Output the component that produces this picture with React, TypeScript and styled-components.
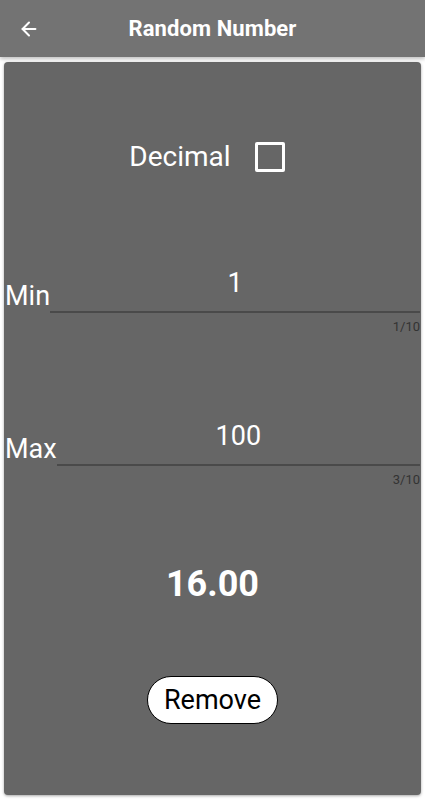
import React, { useState } from "react";
import styled, { createGlobalStyle } from "styled-components";
import { ArrowLeft } from "lucide-react";

const GlobalStyle = createGlobalStyle`
  html, body {
    margin: 0;
    padding: 0;
    background: #ffffff;
    font-family: Roboto, "Noto Sans", sans-serif;
  }
  * {
    box-sizing: border-box;
  }
`

export default function App() {
    const [decimal, setDecimal] = useState(false)
    return (
        <>
            <GlobalStyle />
            <Page>
                <Header>
                    <BackButton aria-label="back">
                        <ArrowLeft size={22} strokeWidth={2.2} />
                    </BackButton>
                    <Title>Random Number</Title>
                </Header>
                <Card>
                    <DecimalRow>
                        <span>Decimal</span>
                        <CheckBox checked={decimal} onClick={() => setDecimal(!decimal)} />
                    </DecimalRow>
                    <Field label="Min" value="1" top={96} />
                    <Field label="Max" value="100" top={87} />
                    <Result>16.00</Result>
                    <RemoveButton>Remove</RemoveButton>
                </Card>
            </Page>
        </>
    )
}

const Field: React.FC<{
    label: string
    value: string
    top: number
}> = ({ label, value, top }) => {
    return (
        <FieldBlock $top={top}>
            <FieldRow>
                <Label>{label}</Label>
                <InputWrap>
                    <Input defaultValue={value} maxLength={10} />
                </InputWrap>
            </FieldRow>
            <Counter>{value.length}/10</Counter>
        </FieldBlock>
    )
}

const Page = styled.div`
  width: 425px;
  height: 800px;
  display: flex;
  flex-direction: column;
`
const Header = styled.div`
  height: 57px;
  flex-shrink: 0;
  background: #737373;
  box-shadow: 0 2px 4px rgba(0, 0, 0, 0.25);
  display: flex;
  align-items: center;
  justify-content: center;
  position: relative;
  z-index: 1;
`
const BackButton = styled.button`
  position: absolute;
  left: 12px;
  top: 16px;
  background: none;
  border: none;
  padding: 2px 6px;
  color: #ffffff;
  display: flex;
`
const Title = styled.div`
  color: #ffffff;
  font-size: 22px;
  font-weight: 700;
  letter-spacing: 0.1px;
  margin-bottom: 1px;
`
const Card = styled.div`
  margin: 5px 4px 5px 4px;
  flex: 1;
  background: #666666;
  border-radius: 4px;
  box-shadow: 0 1px 3px rgba(0, 0, 0, 0.35);
  display: flex;
  flex-direction: column;
  align-items: center;
  padding: 0 1px;
`
const DecimalRow = styled.div`
  margin-top: 80px;
  margin-right: 11px;
  display: flex;
  align-items: center;
  gap: 24px;
  color: #ffffff;
  font-size: 28px;
  line-height: 30px;
`
const CheckBox = styled.div<{ checked: boolean }>`
  width: 30px;
  height: 30px;
  border: 3px solid #ffffff;
  border-radius: 2px;
  background: ${p => p.checked ? '#ffffff' : 'transparent'};
  cursor: pointer;
`
const FieldBlock = styled.div<{ $top: number }>`
  width: 100%;
  margin-top: ${p => p.$top}px;
  display: flex;
  flex-direction: column;
`
const FieldRow = styled.div`
  display: flex;
  align-items: flex-end;
`
const Label = styled.div`
  color: #ffffff;
  font-size: 27px;
  line-height: 32px;
  margin-bottom: 1px;
`
const InputWrap = styled.div`
  flex: 1;
  border-bottom: 2px solid #4a4a4a;
  padding-bottom: 13px;
`
const Input = styled.input`
  width: 100%;
  background: transparent;
  border: none;
  outline: none;
  color: #ffffff;
  text-align: center;
  font-family: Roboto, "Noto Sans", sans-serif;
  font-size: 27px;
  line-height: 30px;
  padding: 0;
`
const Counter = styled.div`
  align-self: flex-end;
  margin-top: 7px;
  color: #333333;
  font-size: 13px;
  line-height: 14px;
`
const Result = styled.div`
  margin-top: 76px;
  color: #ffffff;
  font-size: 36px;
  font-weight: 700;
  line-height: 42px;
`
const RemoveButton = styled.button`
  margin-top: 71px;
  height: 48px;
  padding: 0 16px;
  background: #ffffff;
  color: #000000;
  border: 1px solid #000000;
  border-radius: 24px;
  font-family: Roboto, "Noto Sans", sans-serif;
  font-size: 27px;
  line-height: 30px;
`
